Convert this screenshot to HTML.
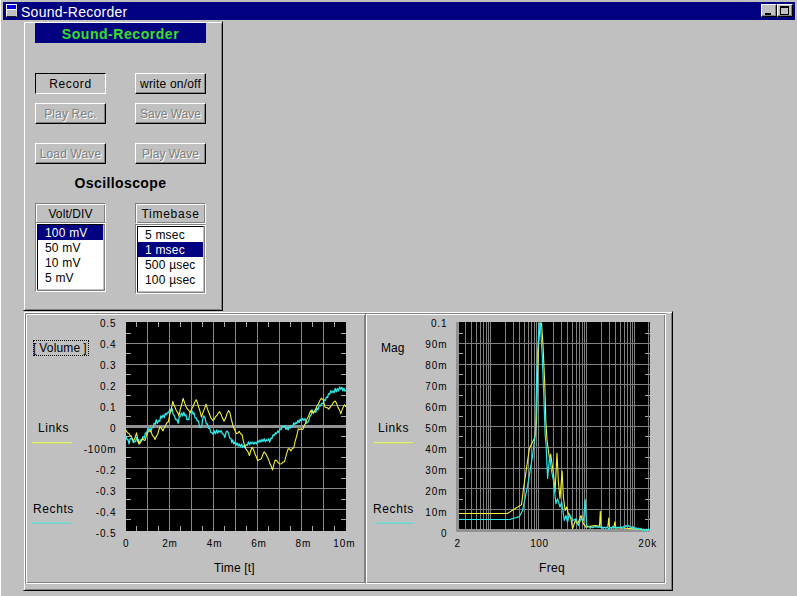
<!DOCTYPE html>
<html><head><meta charset="utf-8"><title>Sound-Recorder</title>
<style>
html,body{margin:0;padding:0;}
body{width:797px;height:596px;background:#c0c0c0;position:relative;overflow:hidden;font-family:"Liberation Sans",sans-serif;font-size:12px;color:#000;}
div{position:absolute;box-sizing:border-box;white-space:nowrap;}
.title{left:3px;top:2px;width:792px;height:18px;background:#000080;}
.title .txt{left:18px;top:2px;font-size:14px;line-height:16px;color:#fff;letter-spacing:0.27px}
.raised{border:1px solid;border-color:#fff #000 #000 #fff;box-shadow:inset -1px -1px 0 #808080;}
.panel{border:1px solid;border-color:#c0c0c0 #000 #000 #c0c0c0;box-shadow:inset 1px 1px 0 #fff, inset -1px -1px 0 #808080;}
.btn{width:71px;height:21px;text-align:center;line-height:21px;border:1px solid;border-color:#fff #000 #000 #fff;box-shadow:inset -1px -1px 0 #808080;}
.btn.dis{color:#808080;text-shadow:1px 1px 0 #fff;}
.btn.down{border-color:#000 #fff #fff #000;box-shadow:none;}
.lab{width:71px;height:21px;line-height:21px;border:1px solid;border-color:#808080 #fff #fff #808080;box-shadow:inset 1px 1px 0 #fff, inset -1px -1px 0 #808080;text-align:center;}
.list{width:71px;height:70px;border:1px solid;border-color:#808080 #fff #fff #808080;box-shadow:inset 1px 1px 0 #fff, inset -1px -1px 0 #808080;}
.list .in{left:1px;top:1px;width:67px;height:66px;background:#fff;border:1px solid;border-color:#000 #c0c0c0 #c0c0c0 #000;}
.list .in div{left:0;width:65px;height:15px;line-height:17px;padding-left:7px;letter-spacing:0.2px}
.list .sel{background:#000080;color:#fff;}
.tk{font-size:10px;line-height:12px;letter-spacing:0.9px;}
.r{text-align:right;} .c{text-align:center;}
.groove{border:1px solid;border-color:#808080 #fff #fff #808080;box-shadow:inset 1px 1px 0 #fff, inset -1px -1px 0 #808080;}
.t12{line-height:14px}
</style></head><body>
<div style="left:0;top:0;width:1px;height:596px;background:#fff"></div>
<div class="title">
  <div style="left:3px;top:2px;width:11px;height:13px;background:#c0c0c0;border:1px solid;border-color:#fff #d8d8d8 #202020 #fff;">
    <div style="left:0;top:0;width:9px;height:4px;background:#0000e0"></div>
    <div style="left:0;top:4px;width:9px;height:1px;background:#fff"></div>
  </div>
  <div class="txt">Sound-Recorder</div>
  <div class="raised" style="left:758px;top:2px;width:16px;height:13px;background:#c0c0c0"><div style="left:3px;top:8px;width:6px;height:2px;background:#000"></div></div>
  <div class="raised" style="left:774px;top:2px;width:16px;height:13px;background:#c0c0c0"><div style="left:2px;top:1px;width:9px;height:9px;border:1px solid #000;border-top-width:2px"></div></div>
</div>

<!-- control panel -->
<div class="panel" style="left:23px;top:21px;width:200px;height:290px;"></div>
<div style="left:35px;top:23px;width:171px;height:20px;background:#000080;color:#38e028;font-weight:bold;font-size:14px;line-height:22px;text-align:center;letter-spacing:0.55px">Sound-Recorder</div>
<div class="btn down" style="left:35px;top:73px;letter-spacing:0.65px">Record</div>
<div class="btn" style="left:135px;top:73px;letter-spacing:0.2px">write on/off</div>
<div class="btn dis" style="left:35px;top:103px;letter-spacing:0.15px">Play Rec.</div>
<div class="btn dis" style="left:135px;top:103px;">Save Wave</div>
<div class="btn dis" style="left:35px;top:143px;letter-spacing:0.15px">Load Wave</div>
<div class="btn dis" style="left:135px;top:143px;">Play Wave</div>
<div style="left:23px;top:175px;width:195px;text-align:center;font-weight:bold;font-size:14px;line-height:16px;letter-spacing:0.4px">Oscilloscope</div>
<div class="lab" style="left:35px;top:203px;letter-spacing:0.1px">Volt/DIV</div>
<div class="lab" style="left:135px;top:203px;letter-spacing:0.75px">Timebase</div>
<div class="list" style="left:35px;top:222px;"><div class="in">
  <div class="sel" style="top:0px">100 mV</div><div style="top:15px">50 mV</div><div style="top:30px">10 mV</div><div style="top:45px">5 mV</div>
</div></div>
<div class="list" style="left:135px;top:224px;"><div class="in">
  <div style="top:0px">5 msec</div><div class="sel" style="top:15px">1 msec</div><div style="top:30px">500 µsec</div><div style="top:45px">100 µsec</div>
</div></div>

<!-- plot panel -->
<div class="panel" style="left:23px;top:311px;width:650px;height:280px;"></div>
<div class="groove" style="left:25px;top:313px;width:341px;height:271px;"></div>
<div class="groove" style="left:365px;top:313px;width:301px;height:271px;"></div>
<svg width="797" height="596" style="position:absolute;left:0;top:0">
<rect x="126" y="322" width="220" height="209" fill="#000"/>
<g stroke="#a8a8a8" stroke-width="1" shape-rendering="crispEdges">
<line x1="126" y1="333.5" x2="131" y2="333.5"/>
<line x1="341" y1="333.5" x2="346" y2="333.5"/>
<line x1="126" y1="353.5" x2="131" y2="353.5"/>
<line x1="341" y1="353.5" x2="346" y2="353.5"/>
<line x1="126" y1="374.5" x2="131" y2="374.5"/>
<line x1="341" y1="374.5" x2="346" y2="374.5"/>
<line x1="126" y1="395.5" x2="131" y2="395.5"/>
<line x1="341" y1="395.5" x2="346" y2="395.5"/>
<line x1="126" y1="416.5" x2="131" y2="416.5"/>
<line x1="341" y1="416.5" x2="346" y2="416.5"/>
<line x1="126" y1="436.5" x2="131" y2="436.5"/>
<line x1="341" y1="436.5" x2="346" y2="436.5"/>
<line x1="126" y1="457.5" x2="131" y2="457.5"/>
<line x1="341" y1="457.5" x2="346" y2="457.5"/>
<line x1="126" y1="478.5" x2="131" y2="478.5"/>
<line x1="341" y1="478.5" x2="346" y2="478.5"/>
<line x1="126" y1="499.5" x2="131" y2="499.5"/>
<line x1="341" y1="499.5" x2="346" y2="499.5"/>
<line x1="126" y1="519.5" x2="131" y2="519.5"/>
<line x1="341" y1="519.5" x2="346" y2="519.5"/>
<line x1="136.5" y1="322" x2="136.5" y2="327"/>
<line x1="136.5" y1="526" x2="136.5" y2="531"/>
<line x1="158.5" y1="322" x2="158.5" y2="327"/>
<line x1="158.5" y1="526" x2="158.5" y2="531"/>
<line x1="180.5" y1="322" x2="180.5" y2="327"/>
<line x1="180.5" y1="526" x2="180.5" y2="531"/>
<line x1="202.5" y1="322" x2="202.5" y2="327"/>
<line x1="202.5" y1="526" x2="202.5" y2="531"/>
<line x1="224.5" y1="322" x2="224.5" y2="327"/>
<line x1="224.5" y1="526" x2="224.5" y2="531"/>
<line x1="246.5" y1="322" x2="246.5" y2="327"/>
<line x1="246.5" y1="526" x2="246.5" y2="531"/>
<line x1="268.5" y1="322" x2="268.5" y2="327"/>
<line x1="268.5" y1="526" x2="268.5" y2="531"/>
<line x1="290.5" y1="322" x2="290.5" y2="327"/>
<line x1="290.5" y1="526" x2="290.5" y2="531"/>
<line x1="312.5" y1="322" x2="312.5" y2="327"/>
<line x1="312.5" y1="526" x2="312.5" y2="531"/>
<line x1="334.5" y1="322" x2="334.5" y2="327"/>
<line x1="334.5" y1="526" x2="334.5" y2="531"/>
</g>
<g stroke="#8a8a8a" stroke-width="1" shape-rendering="crispEdges">
<line x1="147.5" y1="322" x2="147.5" y2="531"/>
<line x1="169.5" y1="322" x2="169.5" y2="531"/>
<line x1="191.5" y1="322" x2="191.5" y2="531"/>
<line x1="213.5" y1="322" x2="213.5" y2="531"/>
<line x1="235.5" y1="322" x2="235.5" y2="531"/>
<line x1="257.5" y1="322" x2="257.5" y2="531"/>
<line x1="279.5" y1="322" x2="279.5" y2="531"/>
<line x1="301.5" y1="322" x2="301.5" y2="531"/>
<line x1="323.5" y1="322" x2="323.5" y2="531"/>
<line x1="126" y1="343.5" x2="346" y2="343.5"/>
<line x1="126" y1="364.5" x2="346" y2="364.5"/>
<line x1="126" y1="384.5" x2="346" y2="384.5"/>
<line x1="126" y1="405.5" x2="346" y2="405.5"/>
<line x1="126" y1="447.5" x2="346" y2="447.5"/>
<line x1="126" y1="468.5" x2="346" y2="468.5"/>
<line x1="126" y1="488.5" x2="346" y2="488.5"/>
<line x1="126" y1="509.5" x2="346" y2="509.5"/>
</g>
<rect x="126" y="425" width="220" height="3" fill="#929292" shape-rendering="crispEdges"/>
<polyline points="126.0,435.6 127.0,439.7 128.0,439.5 129.0,443.9 130.2,438.8 131.3,438.5 132.3,439.1 133.3,442.7 134.3,441.7 135.4,441.7 136.6,437.4 137.6,441.6 138.6,439.7 139.6,443.7 140.8,439.6 141.9,440.1 143.0,436.5 144.2,438.2 145.4,432.9 146.7,433.5 147.9,428.1 148.9,430.4 150.0,428.5 151.0,431.7 152.0,427.7 153.1,427.2 154.1,423.2 155.2,424.3 156.2,419.7 157.3,423.5 158.5,420.5 159.7,421.3 160.8,415.8 161.9,418.1 163.1,414.9 164.2,417.6 165.3,413.5 166.4,414.7 167.6,412.4 168.7,412.7 169.8,408.9 170.9,411.5 172.1,408.6 173.2,414.3 174.3,415.6 175.6,419.6 176.8,419.3 178.1,423.3 179.2,416.9 180.4,416.3 181.5,412.8 182.7,416.0 183.8,412.2 184.9,415.8 185.9,414.8 186.9,419.5 187.9,419.5 188.9,419.7 189.9,412.5 190.9,412.1 191.9,410.5 193.0,414.0 194.0,412.8 195.1,417.9 196.2,417.8 197.4,421.2 198.5,421.0 199.7,427.4 200.8,427.5 201.8,425.4 202.8,418.5 203.8,415.9 205.0,417.9 206.3,423.9 207.5,424.0 208.7,428.4 209.8,428.6 210.9,432.6 212.1,432.7 213.2,434.3 214.3,430.8 215.5,433.8 216.6,429.8 217.7,433.2 218.8,430.6 220.0,432.2 221.1,430.5 222.4,433.9 223.6,434.2 224.9,437.5 226.1,432.0 227.2,431.0 228.4,432.9 229.7,438.2 230.9,438.5 231.8,442.5 232.8,439.9 233.7,443.9 234.8,442.2 236.0,445.1 237.2,442.9 238.3,446.2 239.4,443.9 240.5,446.9 241.6,444.0 242.7,447.5 243.8,445.5 245.0,447.5 246.2,444.4 247.3,445.4 248.5,441.8 249.6,444.9 250.7,442.2 251.8,443.7 252.9,442.0 254.0,444.2 255.2,442.2 256.5,443.7 257.7,440.6 258.8,442.2 259.9,440.0 260.9,442.2 262.0,439.3 263.1,441.5 264.2,438.7 265.3,441.8 266.4,439.8 267.5,440.7 268.6,438.7 269.7,442.1 270.9,438.0 272.0,438.5 273.1,434.7 274.3,435.5 275.4,432.7 276.6,433.7 277.8,430.8 278.9,432.3 280.0,428.9 281.2,429.6 282.4,425.8 283.5,426.7 284.7,425.7 285.9,429.3 287.0,427.5 288.2,429.9 289.3,426.5 290.4,428.0 291.5,425.6 292.6,426.5 293.7,423.0 294.8,424.4 295.9,422.4 296.9,423.6 298.0,420.3 299.1,422.5 300.2,419.0 301.4,420.8 302.6,418.6 303.8,420.3 305.0,418.6 306.3,423.1 307.5,422.7 308.7,421.1 309.9,416.3 311.0,415.2 312.2,409.8 313.4,413.2 314.6,410.8 315.8,412.3 317.0,408.2 318.1,409.7 319.3,405.0 320.5,406.1 321.7,403.3 323.0,403.5 324.2,399.7 325.3,400.6 326.4,397.1 327.5,397.5 328.6,393.7 329.7,394.2 330.8,390.7 331.9,392.6 333.0,391.0 334.1,392.8 335.2,388.5 336.3,391.9 337.4,388.5 338.6,391.1 339.7,387.0 340.8,389.3 341.8,387.3 342.9,391.0 343.9,388.1 345.0,391.2 346.0,390.3" fill="none" stroke="#30e6e6" stroke-width="1.3" stroke-linejoin="round"/>
<polyline points="126.0,430.0 127.5,432.7 129.0,433.5 130.2,435.8 131.3,435.9 132.4,439.3 133.6,440.9 135.1,437.5 136.6,432.8 137.8,439.5 138.9,444.1 140.8,441.9 142.6,438.4 143.8,440.1 145.0,440.6 147.2,433.0 148.7,431.4 150.2,430.6 151.3,432.4 152.5,435.6 153.8,436.7 155.0,439.6 156.3,436.3 157.7,434.4 158.8,430.0 160.0,426.8 161.5,428.4 163.0,430.9 164.2,427.9 165.3,426.0 166.8,423.0 168.3,421.8 169.8,414.5 171.3,408.8 172.8,401.3 173.9,405.1 175.1,407.5 176.4,410.8 177.6,412.3 178.9,415.9 180.3,409.2 181.7,404.5 183.1,398.4 184.8,403.4 186.4,407.5 187.7,409.4 188.9,410.5 190.2,412.7 191.7,409.0 193.2,406.3 194.7,402.3 196.2,399.7 197.3,402.3 198.5,406.6 200.0,411.2 201.5,417.2 203.0,412.3 204.5,408.9 206.0,404.1 207.6,409.4 209.1,413.3 210.9,417.7 212.8,420.5 214.2,419.3 215.5,416.7 216.9,415.5 218.2,413.2 219.6,411.6 221.1,414.6 222.7,418.6 224.2,421.1 225.7,418.0 227.2,413.2 228.7,410.6 230.0,413.1 231.4,419.7 232.8,425.0 234.7,430.0 236.5,433.5 237.8,433.2 239.2,431.3 240.6,433.7 242.0,434.5 243.4,441.2 244.8,446.4 246.3,449.7 247.9,451.7 249.4,455.5 250.8,450.5 252.2,447.2 253.6,449.7 254.9,453.8 256.3,456.8 257.7,460.7 259.5,459.4 261.4,458.8 262.8,454.4 264.2,451.8 265.5,453.3 266.9,455.9 268.3,458.7 269.7,463.1 271.1,465.9 272.5,469.9 273.9,464.2 275.2,460.0 276.7,460.7 278.3,462.9 279.8,464.0 281.4,463.8 282.9,462.2 284.5,461.8 286.4,454.4 288.2,448.7 289.5,448.9 290.9,450.9 292.3,448.5 293.7,448.0 295.2,441.2 296.8,435.6 298.3,428.9 299.8,429.6 301.4,428.8 302.9,429.4 304.3,425.3 305.7,423.1 307.1,418.8 308.4,416.5 309.8,412.6 311.2,410.2 313.1,413.1 315.0,410.4 316.8,406.6 318.3,404.0 319.9,400.5 321.4,398.3 323.2,399.9 325.1,407.3 327.0,407.5 328.8,409.1 330.4,406.6 332.0,404.9 333.6,402.1 335.2,401.0 336.6,403.4 338.0,407.4 339.4,409.7 340.8,413.9 342.6,408.4 344.5,404.7 346.0,406.9" fill="none" stroke="#f0f040" stroke-width="1.1" stroke-linejoin="round"/>
<rect x="456" y="322" width="194" height="210" fill="#000"/>
<g stroke="#a8a8a8" stroke-width="1" shape-rendering="crispEdges">
<line x1="459" y1="333.5" x2="463" y2="333.5"/>
<line x1="645" y1="333.5" x2="650" y2="333.5"/>
<line x1="459" y1="353.5" x2="463" y2="353.5"/>
<line x1="645" y1="353.5" x2="650" y2="353.5"/>
<line x1="459" y1="374.5" x2="463" y2="374.5"/>
<line x1="645" y1="374.5" x2="650" y2="374.5"/>
<line x1="459" y1="395.5" x2="463" y2="395.5"/>
<line x1="645" y1="395.5" x2="650" y2="395.5"/>
<line x1="459" y1="416.5" x2="463" y2="416.5"/>
<line x1="645" y1="416.5" x2="650" y2="416.5"/>
<line x1="459" y1="436.5" x2="463" y2="436.5"/>
<line x1="645" y1="436.5" x2="650" y2="436.5"/>
<line x1="459" y1="457.5" x2="463" y2="457.5"/>
<line x1="645" y1="457.5" x2="650" y2="457.5"/>
<line x1="459" y1="478.5" x2="463" y2="478.5"/>
<line x1="645" y1="478.5" x2="650" y2="478.5"/>
<line x1="459" y1="499.5" x2="463" y2="499.5"/>
<line x1="645" y1="499.5" x2="650" y2="499.5"/>
<line x1="459" y1="519.5" x2="463" y2="519.5"/>
<line x1="645" y1="519.5" x2="650" y2="519.5"/>
</g>
<g stroke="#808080" stroke-width="1" shape-rendering="crispEdges">
<line x1="465.5" y1="322" x2="465.5" y2="531"/>
<line x1="471.5" y1="322" x2="471.5" y2="531"/>
<line x1="476.5" y1="322" x2="476.5" y2="531"/>
<line x1="480.5" y1="322" x2="480.5" y2="531"/>
<line x1="483.5" y1="322" x2="483.5" y2="531"/>
<line x1="486.5" y1="322" x2="486.5" y2="531"/>
<line x1="488.5" y1="322" x2="488.5" y2="531"/>
<line x1="490.5" y1="322" x2="490.5" y2="531"/>
<line x1="505.5" y1="322" x2="505.5" y2="531"/>
<line x1="513.5" y1="322" x2="513.5" y2="531"/>
<line x1="519.5" y1="322" x2="519.5" y2="531"/>
<line x1="524.5" y1="322" x2="524.5" y2="531"/>
<line x1="528.5" y1="322" x2="528.5" y2="531"/>
<line x1="531.5" y1="322" x2="531.5" y2="531"/>
<line x1="534.5" y1="322" x2="534.5" y2="531"/>
<line x1="536.5" y1="322" x2="536.5" y2="531"/>
<line x1="538.5" y1="322" x2="538.5" y2="531"/>
<line x1="553.5" y1="322" x2="553.5" y2="531"/>
<line x1="561.5" y1="322" x2="561.5" y2="531"/>
<line x1="567.5" y1="322" x2="567.5" y2="531"/>
<line x1="572.5" y1="322" x2="572.5" y2="531"/>
<line x1="576.5" y1="322" x2="576.5" y2="531"/>
<line x1="579.5" y1="322" x2="579.5" y2="531"/>
<line x1="582.5" y1="322" x2="582.5" y2="531"/>
<line x1="584.5" y1="322" x2="584.5" y2="531"/>
<line x1="586.5" y1="322" x2="586.5" y2="531"/>
<line x1="601.5" y1="322" x2="601.5" y2="531"/>
<line x1="609.5" y1="322" x2="609.5" y2="531"/>
<line x1="615.5" y1="322" x2="615.5" y2="531"/>
<line x1="620.5" y1="322" x2="620.5" y2="531"/>
<line x1="624.5" y1="322" x2="624.5" y2="531"/>
<line x1="627.5" y1="322" x2="627.5" y2="531"/>
<line x1="630.5" y1="322" x2="630.5" y2="531"/>
<line x1="632.5" y1="322" x2="632.5" y2="531"/>
<line x1="634.5" y1="322" x2="634.5" y2="531"/>
<line x1="648.5" y1="322" x2="648.5" y2="531"/>
<line x1="456" y1="343.5" x2="650" y2="343.5"/>
<line x1="456" y1="364.5" x2="650" y2="364.5"/>
<line x1="456" y1="384.5" x2="650" y2="384.5"/>
<line x1="456" y1="405.5" x2="650" y2="405.5"/>
<line x1="456" y1="426.5" x2="650" y2="426.5"/>
<line x1="456" y1="447.5" x2="650" y2="447.5"/>
<line x1="456" y1="468.5" x2="650" y2="468.5"/>
<line x1="456" y1="488.5" x2="650" y2="488.5"/>
<line x1="456" y1="509.5" x2="650" y2="509.5"/>
</g>
<rect x="456" y="322" width="3" height="210" fill="#929292" shape-rendering="crispEdges"/>
<rect x="456" y="529" width="194" height="3" fill="#929292" shape-rendering="crispEdges"/>
<polyline points="459.0,513.5 507.4,513.5 521.5,504.6 523.5,488.5 529.5,448.2 534.6,438.1 536.6,420.0 537.5,375.0 538.6,345.0 540.2,323.0 541.5,323.0 543.0,345.0 544.8,385.0 545.8,420.0 547.0,440.0 549.7,460.3 550.7,454.0 553.7,476.0 555.0,492.0 557.0,453.4 558.4,482.0 560.0,498.7 562.1,471.0 563.4,497.0 565.1,510.4 566.8,507.0 568.4,513.8 571.0,518.8 572.6,528.9 575.2,520.5 577.7,523.8 581.0,515.5 583.5,523.8 586.0,527.2 590.2,526.4 595.3,525.5 599.5,526.4 600.3,511.3 601.1,527.2 607.8,527.5 608.7,518.0 609.5,527.5 613.7,527.9 614.9,521.8 615.7,527.9 622.1,528.0 633.8,528.9 650.0,529.7" fill="none" stroke="#f0f040" stroke-width="1.1" stroke-linejoin="round"/>
<polyline points="459.0,519.5 509.4,519.5 519.5,516.6 522.5,510.6 527.5,486.4 532.5,456.2 535.6,432.0 536.7,375.4 537.5,355.0 539.2,323.0 540.3,323.0 542.2,355.0 543.8,395.5 545.2,435.0 546.0,444.0 547.6,478.4 549.7,456.0 551.7,472.0 553.4,480.2 555.9,503.7 557.5,498.7 560.0,507.0 561.7,502.0 564.3,520.5 565.9,515.5 567.6,522.2 569.3,513.8 572.6,520.5 576.0,518.8 578.5,525.5 581.0,518.8 583.5,520.5 585.2,499.5 586.5,525.5 586.5,524.9 587.7,526.8 589.0,526.2 590.2,528.3 591.5,526.8 592.8,527.8 594.0,526.5 595.3,527.2 596.5,526.3 597.8,527.5 599.0,526.7 600.3,527.6 601.7,526.6 603.1,528.6 604.5,527.2 605.9,528.2 607.3,527.0 608.7,529.2 610.0,527.1 611.4,528.5 612.7,526.5 614.1,528.0 615.4,526.4 616.7,528.1 618.1,527.0 619.4,527.7 620.8,526.7 622.1,528.3 623.4,526.4 624.6,527.4 625.9,525.3 627.1,526.5 628.4,525.5 629.7,527.0 630.9,526.8 632.2,528.0 633.5,526.8 634.7,528.8 636.0,527.7 637.2,529.5 638.5,528.1 639.7,529.7 641.0,528.3 642.2,530.7 643.5,529.2 644.8,530.7 646.1,529.0 647.4,531.1 648.7,528.9 650.0,530.0" fill="none" stroke="#30e6e6" stroke-width="1.2" stroke-linejoin="round"/>
<g shape-rendering="crispEdges"><rect x="32" y="442" width="40" height="1" fill="#e6ee80"/><rect x="32" y="443" width="40" height="1" fill="#c6ce78"/><rect x="32" y="522" width="40" height="1" fill="#80dcd2"/><rect x="32" y="523" width="40" height="1" fill="#78cfc2"/><rect x="374" y="442" width="39" height="1" fill="#e6ee80"/><rect x="374" y="443" width="39" height="1" fill="#c6ce78"/><rect x="375" y="522" width="38" height="1" fill="#80dcd2"/><rect x="375" y="523" width="38" height="1" fill="#78cfc2"/></g>
</svg>
<div style="left:33px;top:340px;width:56px;height:16px;border:1px dotted #000"></div>
<div class="t12" style="left:33px;top:341px;word-spacing:-0.6px;letter-spacing:0.15px">[ Volume ]</div>
<div class="t12" style="left:38px;top:421px;letter-spacing:0.6px">Links</div>
<div class="t12" style="left:33px;top:502px;letter-spacing:0.6px">Rechts</div>
<div class="t12" style="left:381px;top:341px;">Mag</div>
<div class="t12" style="left:378px;top:421px;letter-spacing:0.6px">Links</div>
<div class="t12" style="left:373px;top:502px;letter-spacing:0.6px">Rechts</div>
<div class="t12" style="left:214px;top:561px;letter-spacing:0.15px">Time [t]</div>
<div class="t12" style="left:539px;top:561px;letter-spacing:0.3px">Freq</div>
<div class="tk r" style="left:56.5px;top:318.0px;width:60px">0.5</div>
<div class="tk r" style="left:56.5px;top:339.0px;width:60px">0.4</div>
<div class="tk r" style="left:56.5px;top:360.0px;width:60px">0.3</div>
<div class="tk r" style="left:56.5px;top:381.0px;width:60px">0.2</div>
<div class="tk r" style="left:56.5px;top:402.0px;width:60px">0.1</div>
<div class="tk r" style="left:56.5px;top:423.0px;width:60px">0</div>
<div class="tk r" style="left:56.5px;top:444.0px;width:60px">-100m</div>
<div class="tk r" style="left:56.5px;top:465.0px;width:60px">-0.2</div>
<div class="tk r" style="left:56.5px;top:486.0px;width:60px">-0.3</div>
<div class="tk r" style="left:56.5px;top:507.0px;width:60px">-0.4</div>
<div class="tk r" style="left:56.5px;top:528.0px;width:60px">-0.5</div>
<div class="tk r" style="left:387.5px;top:318.0px;width:60px">0.1</div>
<div class="tk r" style="left:387.5px;top:339.0px;width:60px">90m</div>
<div class="tk r" style="left:387.5px;top:360.0px;width:60px">80m</div>
<div class="tk r" style="left:387.5px;top:381.0px;width:60px">70m</div>
<div class="tk r" style="left:387.5px;top:402.0px;width:60px">60m</div>
<div class="tk r" style="left:387.5px;top:423.0px;width:60px">50m</div>
<div class="tk r" style="left:387.5px;top:444.0px;width:60px">40m</div>
<div class="tk r" style="left:387.5px;top:465.0px;width:60px">30m</div>
<div class="tk r" style="left:387.5px;top:486.0px;width:60px">20m</div>
<div class="tk r" style="left:387.5px;top:507.0px;width:60px">10m</div>
<div class="tk r" style="left:387.5px;top:528.0px;width:60px">0</div>
<div class="tk c" style="left:106.3px;top:538px;width:40px">0</div>
<div class="tk c" style="left:150.0px;top:538px;width:40px">2m</div>
<div class="tk c" style="left:194.6px;top:538px;width:40px">4m</div>
<div class="tk c" style="left:239.0px;top:538px;width:40px">6m</div>
<div class="tk c" style="left:283.4px;top:538px;width:40px">8m</div>
<div class="tk c" style="left:324.3px;top:538px;width:40px">10m</div>
<div class="tk c" style="left:437.8px;top:538px;width:40px;letter-spacing:0.9px">2</div>
<div class="tk c" style="left:519.4px;top:538px;width:40px;letter-spacing:0.45px">100</div>
<div class="tk c" style="left:627.7px;top:538px;width:40px;letter-spacing:0.9px">20k</div>
</body></html>
